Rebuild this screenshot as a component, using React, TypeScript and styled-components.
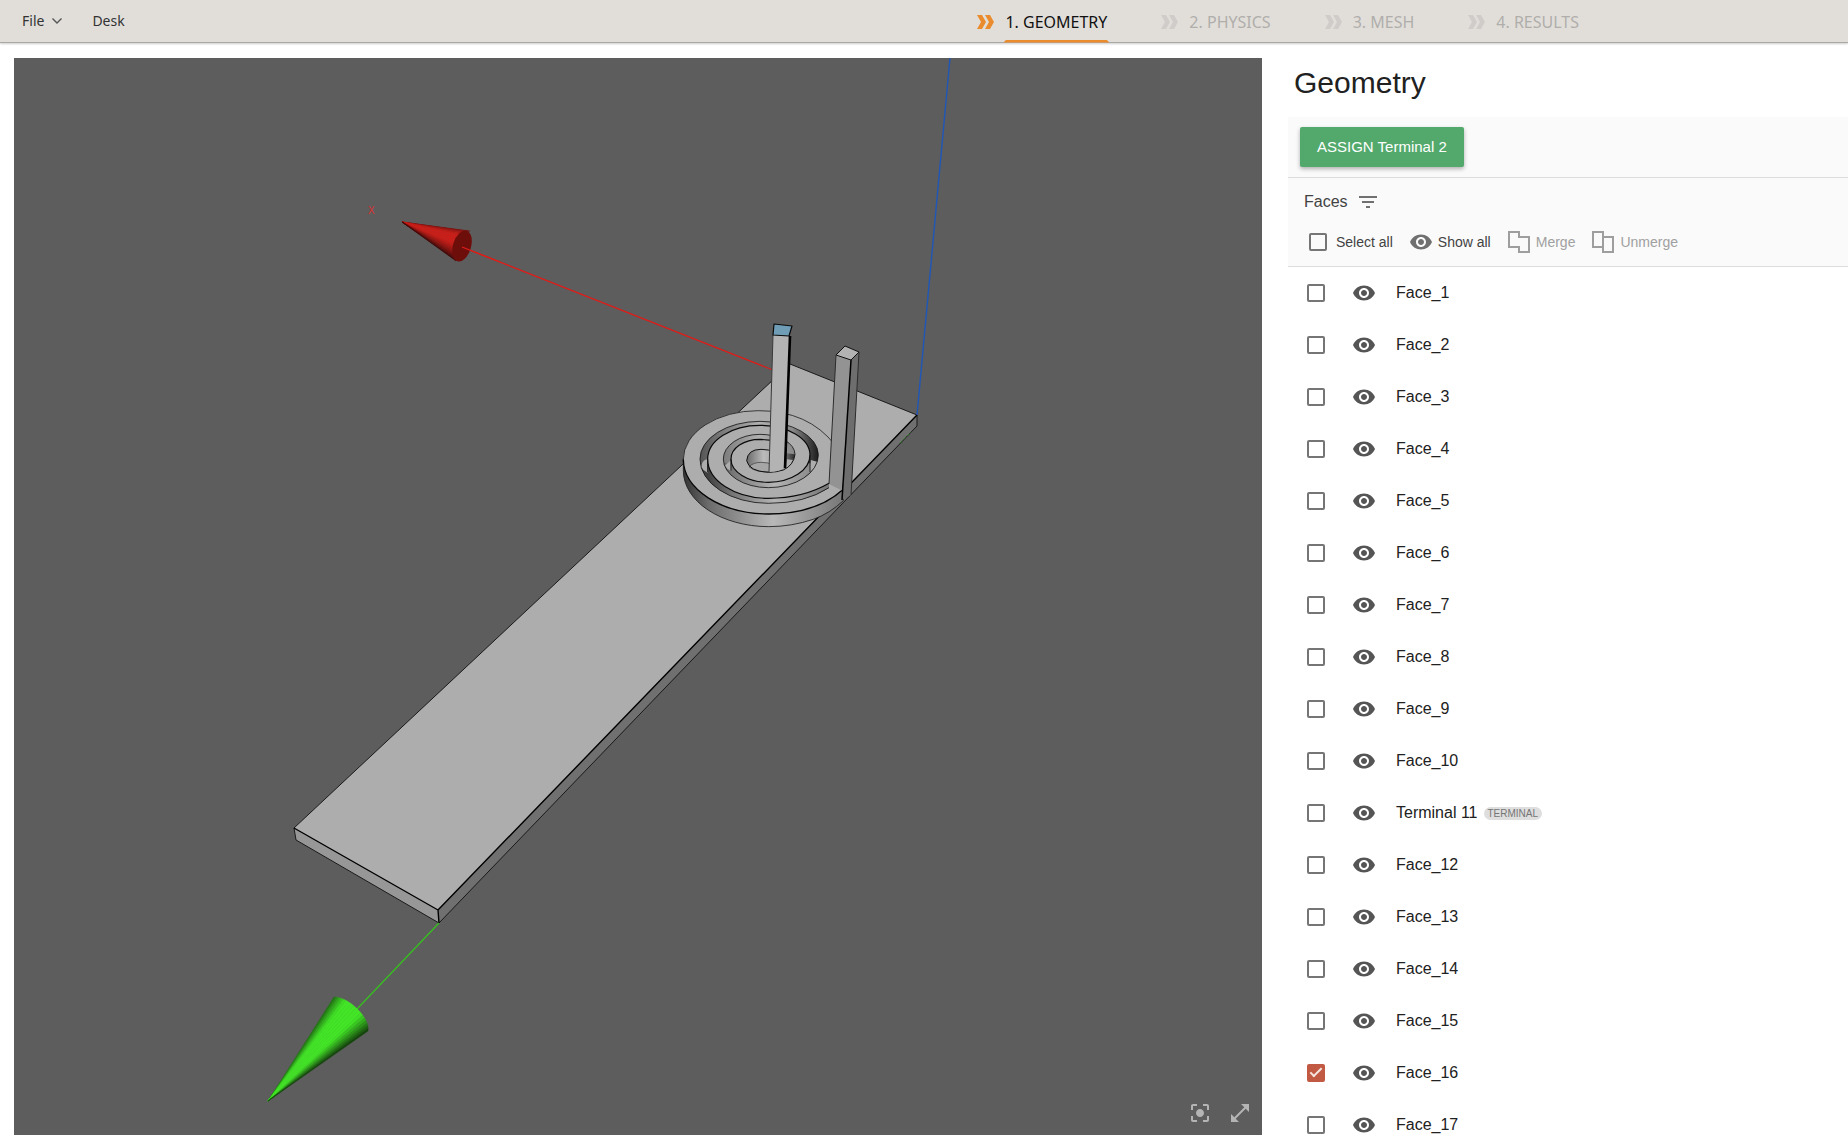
import React, { useState } from "react";
import styled, { createGlobalStyle, css } from "styled-components";
import { MdCenterFocusStrong, MdFilterList, MdOpenInFull, MdVisibility } from "react-icons/md";

const GlobalStyle = createGlobalStyle`
  *, *::before, *::after { box-sizing: border-box; }
  body {
    margin: 0;
    background: #ffffff;
    color: #212121;
    font-family: "Liberation Sans", Arial, sans-serif;
  }
  button { font: inherit; color: inherit; border: 0; background: none; padding: 0; cursor: pointer; }
`;

const Page = styled.div`
  display: flex;
  flex-direction: column;
  height: 100vh;
  overflow: hidden;
`;

const Header = styled.header`
  display: flex;
  align-items: stretch;
  flex: none;
  height: 43px;
  padding: 0 267px 0 22px;
  background: #e1deda;
  border-bottom: 1px solid #aaa7a5;
  box-shadow: 0 1px 2px rgba(0, 0, 0, 0.2);
  font-family: "Noto Sans", "Open Sans", sans-serif;
`;

const Menu = styled.div`
  display: flex;
  align-items: center;
  gap: 30px;
`;

const MenuButton = styled.button`
  display: flex;
  align-items: center;
  gap: 8px;
  font-size: 14px;
  line-height: 20px;
  color: #333333;
`;

const Steps = styled.nav`
  display: flex;
  gap: 52px;
  margin-left: auto;
`;

const Step = styled.a<{ $active?: boolean }>`
  display: flex;
  align-items: center;
  gap: 8px;
  padding-top: 1px;
  text-decoration: none;
  font-size: 16px;
  line-height: 22px;
  color: ${(p) => (p.$active ? "#111111" : "#b0aeab")};
  svg { fill: ${(p) => (p.$active ? "#ea8c2e" : "#cfccc9")}; }
`;

const StepLabel = styled.span<{ $active?: boolean }>`
  position: relative;
  display: flex;
  align-items: center;
  height: 42px;
  padding: 0 2px;
  ${(p) =>
    p.$active &&
    css`
      &::after {
        content: "";
        position: absolute;
        left: 0;
        right: 0;
        bottom: 0;
        height: 3px;
        background: #ea8c2e;
        clip-path: polygon(3px 0, calc(100% - 3px) 0, 100% 100%, 0 100%);
      }
    `}
`;

const Main = styled.main`
  flex: 1;
  min-height: 0;
  display: grid;
  grid-template-columns: minmax(0, 1fr) 560px;
  grid-template-rows: minmax(0, 1fr);
  column-gap: 26px;
  padding-left: 14px;
`;

const Viewer = styled.section`
  position: relative;
  margin: 15px 0 10px;
  background: #5d5d5d;
  overflow: hidden;
`;

const Scene = styled.svg`
  display: block;
  width: 100%;
  height: 100%;
`;

const ViewerTools = styled.div`
  position: absolute;
  right: 10px;
  bottom: 10px;
  display: flex;
  gap: 16px;
`;

const IconButton = styled.button<{ $color: string }>`
  display: flex;
  width: 24px;
  height: 24px;
  color: ${(p) => p.$color};
`;

const Panel = styled.aside`
  display: flex;
  flex-direction: column;
  min-height: 0;
  overflow: hidden;
`;

const Title = styled.h1`
  margin: 0;
  padding: 23px 6px 17px;
  font-size: 30px;
  line-height: 34px;
  font-weight: 400;
`;

const ActionBar = styled.div`
  padding: 10px 12px;
  background: #fafafa;
  border-bottom: 1px solid #dcdcdc;
`;

const AssignButton = styled.button`
  display: block;
  height: 40px;
  padding: 0 17px 2px;
  border-radius: 2px;
  background: #53a96c;
  color: #ffffff;
  font-size: 15px;
  box-shadow: 0 2px 4px rgba(0, 0, 0, 0.3);
`;

const FacesHeader = styled.div`
  background: #fafafa;
  border-bottom: 1px solid #dcdcdc;
`;

const FacesTitle = styled.h2`
  display: flex;
  align-items: center;
  gap: 8px;
  height: 40px;
  margin: 0;
  padding: 8px 16px 0;
  font-size: 16px;
  font-weight: 400;
  color: #424242;
`;

const BulkActions = styled.div`
  display: flex;
  align-items: center;
  gap: 16px;
  height: 48px;
  padding: 0 21px;
`;

const BulkLabel = styled.label`
  display: flex;
  align-items: center;
  gap: 9px;
  font-size: 14px;
  color: #424242;
`;

const BulkButton = styled.button`
  display: flex;
  align-items: center;
  gap: 5px;
  font-size: 14px;
  color: #424242;
  svg { color: #707070; }
  &:disabled { color: #a0a0a0; cursor: default; }
  &:disabled svg { color: #9e9e9e; }
`;

const Checkbox = styled.input`
  appearance: none;
  flex: none;
  width: 18px;
  height: 18px;
  margin: 0;
  border: 2px solid #757575;
  border-radius: 2px;
  display: grid;
  place-items: center;
  &:checked { border-color: #c25a43; background: #c25a43; }
  &:checked::after {
    content: "";
    width: 12px;
    height: 6px;
    margin-bottom: 4px;
    border: solid #f6e6e2;
    border-width: 0 0 2px 2px;
    transform: rotate(-45deg);
  }
`;

const FaceList = styled.ul`
  flex: 1;
  min-height: 0;
  margin: 0;
  padding: 0;
  list-style: none;
  overflow: hidden;
`;

const FaceRow = styled.li`
  display: flex;
  align-items: center;
  height: 52px;
  padding-left: 19px;
  gap: 20px;
`;

const FaceToggle = styled(IconButton)`
  margin-left: 7px;
`;

const FaceName = styled.label`
  font-size: 16px;
  line-height: 20px;
`;

const Tag = styled.span`
  margin-left: -14px;
  padding: 0 4px;
  border-radius: 7px;
  background: #dedede;
  color: #757575;
  font-size: 10px;
  line-height: 13px;
`;

const Chevrons = () => (
  <svg width="18" height="14" viewBox="0 0 18 14" aria-hidden="true">
    <path d="M0 0h5l4 7-4 7H0l4-7zM8 0h5l4 7-4 7H8l4-7z" />
  </svg>
);

const MergeIcon = () => (
  <svg width="24" height="24" viewBox="0 0 24 24" fill="none" stroke="currentColor" strokeWidth="2" aria-hidden="true">
    <path d="M2 2h10v5h10v15H12v-5H2z" />
  </svg>
);

const UnmergeIcon = () => (
  <svg width="24" height="24" viewBox="0 0 24 24" fill="none" stroke="currentColor" strokeWidth="2" aria-hidden="true">
    <path d="M12 17H2V2h10v5M12 7h10v15H12z" />
  </svg>
);

type Point = [number, number];

/* A cone seen from the side: thin facets fan out from the tip to the rim. */
function Cone({ tip, rim, shade }: { tip: Point; rim: Point[]; shade: (t: number) => string }) {
  return (
    <g>
      {rim.slice(1).map((p, i) => {
        const fill = shade((i + 0.5) / (rim.length - 1));
        return (
          <path
            key={i}
            d={`M${tip.join(" ")}L${rim[i].join(" ")}L${p.join(" ")}z`}
            fill={fill}
            stroke={fill}
            strokeWidth="0.5"
          />
        );
      })}
    </g>
  );
}

function curvePoints(from: Point, c1: Point, c2: Point, to: Point, count: number): Point[] {
  return Array.from({ length: count + 1 }, (_, i) => {
    const t = i / count;
    const u = 1 - t;
    const at = (k: 0 | 1) =>
      u * u * u * from[k] + 3 * u * u * t * c1[k] + 3 * u * t * t * c2[k] + t * t * t * to[k];
    return [at(0), at(1)] as Point;
  });
}

const greenRim = curvePoints([334, 997], [346, 996], [370, 1016], [368, 1031], 18);
const redRim = curvePoints([470, 231], [458, 231], [449, 252], [456, 261], 18);

const greenShade = (t: number) => {
  const l = Math.min(1, Math.max(0.25, 1.35 - Math.abs(t - 0.45) * 2));
  return `rgb(${Math.round(66 * l)}, ${Math.round(230 * l)}, ${Math.round(38 * l)})`;
};
const redShade = (t: number) => {
  const l = Math.min(1, Math.max(0.3, 1.2 - Math.abs(t - 0.42) * 1.6));
  return `rgb(${Math.round(203 * l)}, ${Math.round(30 * l)}, ${Math.round(24 * l)})`;
};

/* Winding gap of the coil: its outer side runs inwards, its inner side runs back out. */
const gapOuter =
  "M462 263Q390 310 280 310A205 133 0 0 1 75 177A180 113 0 0 1 255 64A175 101 0 0 1 430 165A150 98 0 0 1 280 263A135 86 0 0 1 145 177A110 74 0 0 1 255 103A105 60 0 0 1 360 163";
const gapInner =
  "M462 250Q385 295 280 295A182 118 0 0 1 98 177A157 101 0 0 1 255 76A150 89 0 0 1 405 165A125 82 0 0 1 280 247A112 70 0 0 1 168 177A87 59 0 0 1 255 118L300 122";
const gapArea = `${gapOuter}L300 180L300 122L255 118A87 59 0 0 0 168 177A112 70 0 0 0 280 247A125 82 0 0 0 405 165A150 89 0 0 0 255 76A157 101 0 0 0 98 177A182 118 0 0 0 280 295Q385 295 462 250z`;

function Coil() {
  return (
    <g transform="translate(675 400) scale(0.3333)" strokeLinejoin="round" fill="none">
      <path
        d="M25 178V212A257 168 0 0 0 280 380Q350 380 415 358Q465 340 505 302V262L280 300z"
        fill="url(#coilWall)"
        stroke="#1c1c1c"
        strokeWidth="2.5"
      />
      <path d="M480 135Q400 32 250 32A225 146 0 0 0 25 178A257 164 0 0 0 280 342Q425 342 505 268z" fill="#adadad" />
      <path d="M480 135Q400 32 250 32A225 146 0 0 0 25 178" stroke="#222222" strokeWidth="2.5" />
      <path d="M25 178A257 164 0 0 0 280 342Q425 342 505 268" stroke="#050505" strokeWidth="4" />
      <path d={gapArea} fill="url(#coilGapFar)" />
      <path d={gapArea} fill="url(#coilGapNear)" clipPath="url(#coilFront)" />
      <path d="M78 200Q82 180 96 178L98 218Q84 212 78 200z" fill="#adadad" />
      <path d="M407 180L427 185Q420 206 406 216z" fill="#adadad" />
      <path d="M149 197L166 182L167 212Q157 208 149 197z" fill="#adadad" />
      <path d={gapOuter} stroke="#161616" strokeWidth="2.5" />
      <path d={gapInner} stroke="#0a0a0a" strokeWidth="3.5" />
      <path d="M98 177V216M168 177V212M405 165V216" stroke="#111111" strokeWidth="2.5" />
      <path d="M215 182Q218 148 258 148Q280 148 300 156L360 163Q356 196 325 210Q304 217 280 217Q222 214 215 182z" fill="url(#coilHole)" />
      <path d="M222 200Q236 187 258 187T292 194V216Q240 218 222 200z" fill="#a6a6a6" stroke="#333333" strokeWidth="2" />
      <path d="M336 178L355 180Q348 196 332 206z" fill="#adadad" />
      <path d="M360 163Q356 196 325 210Q304 217 280 217Q222 214 215 182Q218 148 258 148Q280 148 300 156" stroke="#111111" strokeWidth="3" />
    </g>
  );
}

function GeometryScene() {
  return (
    <Scene viewBox="14 58 1248 1077" preserveAspectRatio="xMidYMid slice" role="img" aria-label="3D geometry view">
      <defs>
        <linearGradient id="coilWall" gradientUnits="userSpaceOnUse" x1="25" y1="0" x2="505" y2="0">
          <stop offset="0" stopColor="#333333" />
          <stop offset="0.16" stopColor="#6c6c6c" />
          <stop offset="0.56" stopColor="#b8b8b8" />
          <stop offset="1" stopColor="#777777" />
        </linearGradient>
        <linearGradient id="coilGapFar" gradientUnits="userSpaceOnUse" x1="75" y1="0" x2="430" y2="0">
          <stop offset="0" stopColor="#555555" />
          <stop offset="0.22" stopColor="#808080" />
          <stop offset="0.5" stopColor="#b0b0b0" />
          <stop offset="0.78" stopColor="#8a8a8a" />
          <stop offset="1" stopColor="#1c1c1c" />
        </linearGradient>
        <linearGradient id="coilGapNear" gradientUnits="userSpaceOnUse" x1="98" y1="0" x2="462" y2="0">
          <stop offset="0" stopColor="#404040" />
          <stop offset="0.2" stopColor="#757575" />
          <stop offset="0.55" stopColor="#b4b4b4" />
          <stop offset="1" stopColor="#777777" />
        </linearGradient>
        <linearGradient id="coilHole" gradientUnits="userSpaceOnUse" x1="215" y1="0" x2="360" y2="0">
          <stop offset="0" stopColor="#6a6a6a" />
          <stop offset="0.35" stopColor="#bbbbbb" />
          <stop offset="0.7" stopColor="#999999" />
          <stop offset="1" stopColor="#2a2a2a" />
        </linearGradient>
        <clipPath id="coilFront">
          <rect x="0" y="190" width="540" height="215" />
        </clipPath>
      </defs>

      <path d="M790 364L917 415L438 910L294 828z" fill="#adadad" />
      <path d="M294 828L438 910L439 923L296 840z" fill="#979797" />
      <path d="M438 910L917 415V426L439 923z" fill="#707070" />
      <g fill="none" stroke="#1a1a1a" strokeLinejoin="round">
        <path d="M917 415L790 364L294 828L296 840L439 923L917 426z" />
        <path d="M294 828L438 910L439 923M438 910L917 415" stroke="#000000" strokeWidth="1.4" />
      </g>
      <path d="M917 415L950 58" stroke="#1f57b8" strokeWidth="1.4" />
      <path d="M462 247L773 370" stroke="#dc1e1a" strokeWidth="1.3" />
      <path d="M439 923L357 1009" stroke="#35c01e" strokeWidth="1.3" />
      <path d="M900 443L911 432" stroke="#2b7a20" strokeWidth="1" strokeDasharray="3 2" />

      <Coil />

      <g strokeLinejoin="round">
        <path d="M773 335L790 336L785 468Q778 472 769 472z" fill="#b3b3b3" />
        <path d="M773 335L769 472" stroke="#3a3a3a" fill="none" />
        <path d="M790 336L785 468" stroke="#000000" strokeWidth="2.6" />
        <path d="M774 324L792 326L789 336L773 335z" fill="#6f9db6" stroke="#0b0b0b" strokeWidth="1.2" />
        <path d="M836 355L851 360L843 491L829 484z" fill="#939393" />
        <path d="M851 360L859 352L851 495L842 500z" fill="#6e6e6e" />
        <path d="M836 355L845 346L859 352L851 360z" fill="#b3b3b3" stroke="#111111" />
        <path d="M836 355L829 484M859 352L851 495" stroke="#2c2c2c" fill="none" />
        <path d="M851 360L842 500" stroke="#000000" strokeWidth="1.5" fill="none" />
      </g>

      <Cone tip={[402, 222]} rim={redRim} shade={redShade} />
      <ellipse cx="462" cy="246" rx="9" ry="16" fill="#6e0e0b" transform="rotate(17 462 246)" />
      <path d="M462 247L500 262" stroke="#dc1e1a" strokeWidth="1.3" />
      <text x="368" y="214" fill="#dc3030" fontSize="10" fontFamily="Liberation Sans, Arial, sans-serif">X</text>
      <Cone tip={[268, 1101]} rim={greenRim} shade={greenShade} />
    </Scene>
  );
}

const steps = ["1. GEOMETRY", "2. PHYSICS", "3. MESH", "4. RESULTS"];

const faces = Array.from({ length: 17 }, (_, i) => ({
  id: i + 1,
  name: i === 10 ? "Terminal 11" : `Face_${i + 1}`,
  terminal: i === 10,
}));

export default function App() {
  const [selected, setSelected] = useState<number[]>([16]);
  const toggle = (id: number) =>
    setSelected((s) => (s.includes(id) ? s.filter((x) => x !== id) : [...s, id]));

  return (
    <Page>
      <GlobalStyle />
      <Header>
        <Menu>
          <MenuButton>
            File
            <svg width="10" height="6" viewBox="0 0 10 6" fill="none" stroke="#555555" strokeWidth="1.4" aria-hidden="true">
              <path d="M0.5 0.5L5 5L9.5 0.5" />
            </svg>
          </MenuButton>
          <MenuButton>Desk</MenuButton>
        </Menu>
        <Steps>
          {steps.map((label, i) => (
            <Step key={label} href="#" $active={i === 0}>
              <Chevrons />
              <StepLabel $active={i === 0}>{label}</StepLabel>
            </Step>
          ))}
        </Steps>
      </Header>
      <Main>
        <Viewer>
          <GeometryScene />
          <ViewerTools>
            <IconButton $color="#b4b4b4" aria-label="Fit to view"><MdCenterFocusStrong size={24} /></IconButton>
            <IconButton $color="#b4b4b4" aria-label="Full screen"><MdOpenInFull size={24} /></IconButton>
          </ViewerTools>
        </Viewer>
        <Panel>
          <Title>Geometry</Title>
          <ActionBar>
            <AssignButton>ASSIGN Terminal 2</AssignButton>
          </ActionBar>
          <FacesHeader>
            <FacesTitle>
              Faces
              <IconButton $color="#707070" aria-label="Filter faces"><MdFilterList size={24} /></IconButton>
            </FacesTitle>
            <BulkActions>
              <BulkLabel>
                <Checkbox
                  type="checkbox"
                  checked={selected.length === faces.length}
                  onChange={(e) => setSelected(e.target.checked ? faces.map((f) => f.id) : [])}
                />
                Select all
              </BulkLabel>
              <BulkButton><MdVisibility size={24} />Show all</BulkButton>
              <BulkButton disabled><MergeIcon />Merge</BulkButton>
              <BulkButton disabled><UnmergeIcon />Unmerge</BulkButton>
            </BulkActions>
          </FacesHeader>
          <FaceList>
            {faces.map((f) => (
              <FaceRow key={f.id}>
                <Checkbox
                  id={`face-${f.id}`}
                  type="checkbox"
                  checked={selected.includes(f.id)}
                  onChange={() => toggle(f.id)}
                />
                <FaceToggle $color="#555555" aria-label={`Toggle ${f.name}`}><MdVisibility size={24} /></FaceToggle>
                <FaceName htmlFor={`face-${f.id}`}>{f.name}</FaceName>
                {f.terminal && <Tag>TERMINAL</Tag>}
              </FaceRow>
            ))}
          </FaceList>
        </Panel>
      </Main>
    </Page>
  );
}
